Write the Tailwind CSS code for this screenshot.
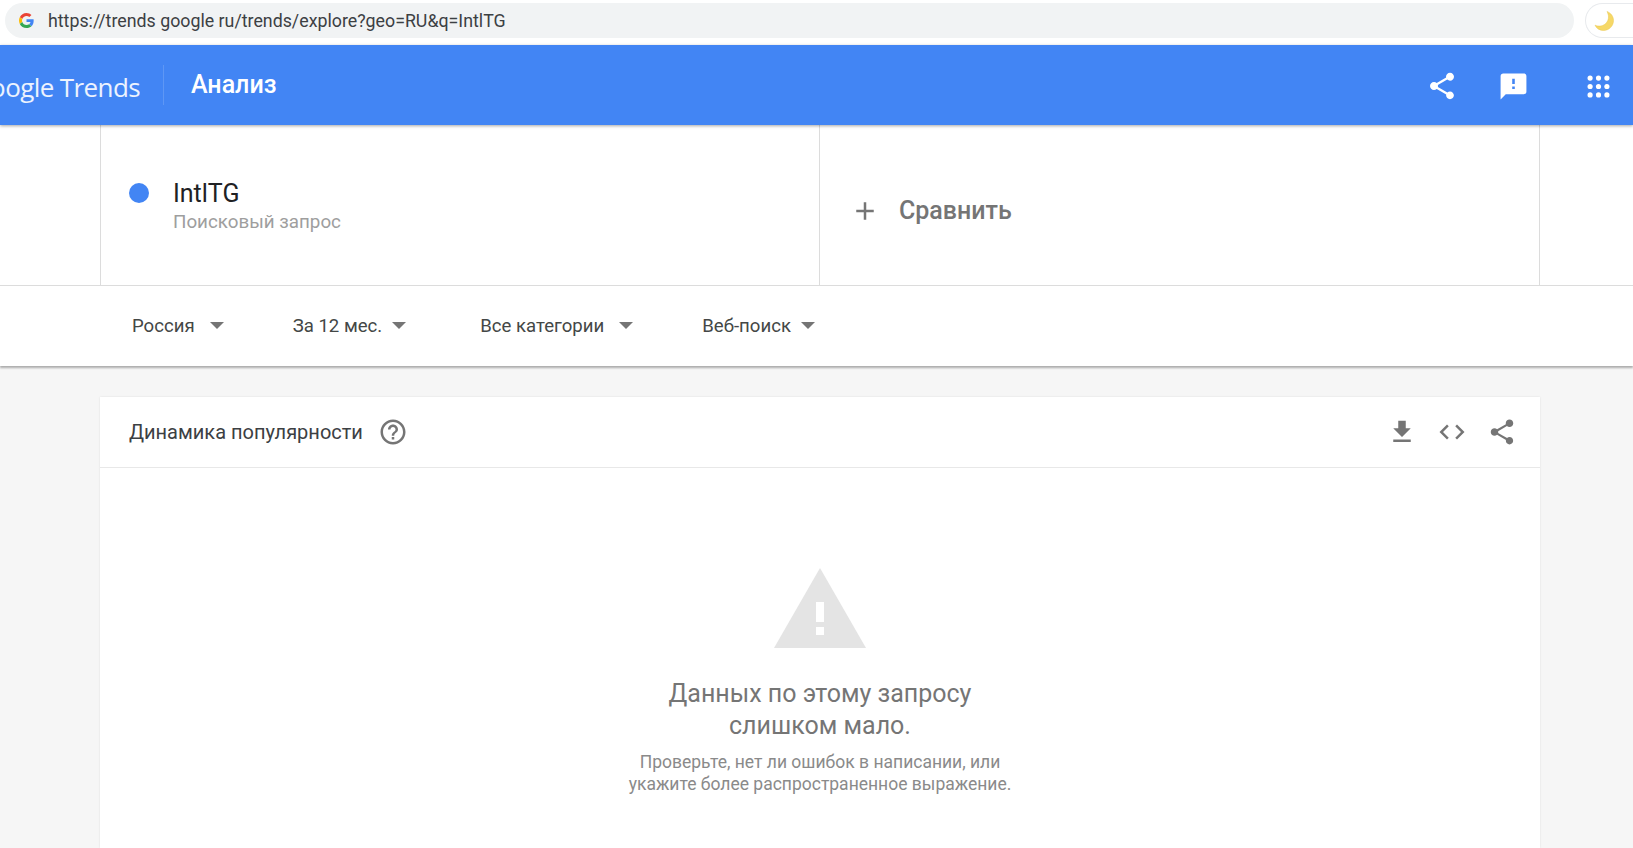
<!DOCTYPE html>
<html lang="ru">
<head>
    <meta charset="UTF-8">
    <title>Google Trends</title>
    <script src="https://cdn.jsdelivr.net/npm/@tailwindcss/browser@4"></script>
</head>
<body class="h-[848px] w-[1633px] overflow-hidden bg-[#f6f6f6] font-['Roboto',sans-serif]">
    <!-- Browser address bar -->
    <div class="flex h-[45px] items-start overflow-hidden bg-white pl-[5px] pt-[3px]">
        <div class="flex h-[35px] w-[1569px] shrink-0 items-center rounded-full bg-[#f1f3f4] pl-[14px]">
            <svg class="h-[15px] w-[15px]" viewBox="0 0 48 48">
                <path fill="#EA4335" d="M24 9.500c3.500 0 6.700 1.300 9.100 3.500l6.800-6.800C35.800 2.400 30.300 0 24 0 14.600 0 6.500 5.400 2.600 13.200l7.900 6.200C12.400 13.700 17.700 9.500 24 9.500z"/>
                <path fill="#4285F4" d="M46.900 24.500c0-1.600-.1-3.100-.4-4.500H24v9h12.900c-.6 3-2.200 5.500-4.700 7.200l7.600 5.900c4.400-4.100 7.100-10.100 7.100-17.600z"/>
                <path fill="#FBBC05" d="M10.500 28.600c-.5-1.400-.8-3-.8-4.600s.3-3.200.8-4.600l-7.900-6.200C.9 16.500 0 20.100 0 24s.9 7.500 2.600 10.800l7.900-6.200z"/>
                <path fill="#34A853" d="M24 48c6.500 0 11.900-2.100 15.800-5.800l-7.600-5.900c-2.100 1.400-4.900 2.300-8.200 2.300-6.300 0-11.600-4.200-13.500-9.900l-7.900 6.200C6.500 42.600 14.600 48 24 48z"/>
            </svg>
            <span class="ml-[14px] pt-[1px] text-[17.800px] text-[#3c4043]">https://trends google ru/trends/explore?geo=RU&amp;q=IntlTG</span>
        </div>
        <div class="ml-[11px] flex h-[35px] w-[60px] shrink-0 items-center rounded-l-full border border-r-0 border-[#e8eaed] bg-white pl-[6px]">
            <svg class="h-[24px] w-[24px]" viewBox="0 0 24 24">
                <path fill="#f6d867" stroke="#e8c64e" stroke-width="0.500" d="M15 2.500c4 1.500 6.500 5 6.500 9 0 5.500-4.500 10-10 10-3.700 0-7-2-8.500-5.300 1.300.6 2.700.9 4.200.9 5.200 0 9.300-4 9.300-9.100 0-1.900-.6-3.900-1.500-5.500z"/>
            </svg>
        </div>
    </div>

    <!-- Blue header -->
    <header class="relative z-10 flex h-[80px] items-center bg-[#4285f4] shadow-[0_1px_3px_rgba(0,0,0,0.35)]">
        <div class="w-[140px] shrink-0 overflow-hidden pt-[4px]">
            <div class="flex justify-end whitespace-nowrap font-['Open_Sans',sans-serif] text-[26px] tracking-[-0.6px] text-white/90">Google Trends</div>
        </div>
        <div class="ml-[23px] h-[40px] w-px bg-white/15"></div>
        <h1 class="ml-[27px] text-[25px] font-medium text-white">Анализ</h1>
        <div class="ml-auto flex items-center pt-[2px]">
            <svg class="h-[32px] w-[32px] text-white" viewBox="0 0 24 24" fill="currentColor">
                <path d="M18 16.080c-.76 0-1.440.3-1.960.77L8.910 12.700c.05-.23.090-.46.090-.7s-.040-.47-.090-.7l7.050-4.110c.54.5 1.250.81 2.040.81 1.660 0 3-1.340 3-3s-1.340-3-3-3-3 1.340-3 3c0 .24.040.47.090.7L8.040 9.810C7.500 9.310 6.790 9 6 9c-1.660 0-3 1.340-3 3s1.340 3 3 3c.79 0 1.500-.31 2.040-.81l7.120 4.160c-.05.21-.080.43-.080.65 0 1.610 1.310 2.920 2.920 2.920s2.920-1.310 2.920-2.920-1.310-2.920-2.920-2.920z"/>
            </svg>
            <svg class="ml-[40px] h-[31px] w-[31px] text-white" viewBox="0 0 24 24" fill="currentColor">
                <path d="M20 2H4c-1.100 0-1.990.9-1.990 2L2 22l4-4h14c1.100 0 2-.9 2-2V4c0-1.100-.9-2-2-2zm-7 12h-2v-2h2v2zm0-4h-2V6h2v4z"/>
            </svg>
            <svg class="ml-[54px] mr-[19px] h-[31px] w-[31px] text-white" viewBox="0 0 24 24" fill="currentColor">
                <circle cx="5.500" cy="5.500" r="2"/><circle cx="12" cy="5.500" r="2"/><circle cx="18.500" cy="5.500" r="2"/>
                <circle cx="5.500" cy="12" r="2"/><circle cx="12" cy="12" r="2"/><circle cx="18.500" cy="12" r="2"/>
                <circle cx="5.500" cy="18.500" r="2"/><circle cx="12" cy="18.500" r="2"/><circle cx="18.500" cy="18.500" r="2"/>
            </svg>
        </div>
    </header>

    <!-- Search terms and filters -->
    <section class="bg-white shadow-[0_2px_2px_rgba(0,0,0,0.3)]">
        <div class="flex h-[161px] border-b border-[#dcdcdc] pl-[100px]">
            <div class="flex w-[720px] items-start border-x border-[#dcdcdc] pl-[28px] pt-[54px]">
                <span class="mt-[4px] h-[20px] w-[20px] rounded-full bg-[#4285f4]"></span>
                <div class="ml-[24px]">
                    <div class="text-[25px] leading-[30px] text-[#202124]">IntlTG</div>
                    <div class="text-[18.800px] leading-[26px] text-[#9e9e9e]">Поисковый запрос</div>
                </div>
            </div>
            <div class="flex w-[720px] items-center border-r border-[#dcdcdc] pl-[30px] pt-[12px]">
                <svg class="h-[30px] w-[30px] text-[#757575]" viewBox="0 0 24 24" fill="currentColor">
                    <path d="M19 13h-6v6h-2v-6H5v-2h6V5h2v6h6v2z"/>
                </svg>
                <span class="ml-[19px] text-[25px] font-medium text-[#757575]">Сравнить</span>
            </div>
        </div>
        <div class="flex h-[80px] items-center pl-[132px] pt-[2px] text-[18.600px] text-[#444746]">
            <span>Россия</span>
            <span class="mb-[4px] ml-[15px] h-0 w-0 border-x-[7px] border-t-[7px] border-x-transparent border-t-[#757575]"></span>
            <span class="ml-[69px]">За 12 мес.</span>
            <span class="mb-[4px] ml-[10px] h-0 w-0 border-x-[7px] border-t-[7px] border-x-transparent border-t-[#757575]"></span>
            <span class="ml-[74px]">Все категории</span>
            <span class="mb-[4px] ml-[15px] h-0 w-0 border-x-[7px] border-t-[7px] border-x-transparent border-t-[#757575]"></span>
            <span class="ml-[69px]">Веб-поиск</span>
            <span class="mb-[4px] ml-[10px] h-0 w-0 border-x-[7px] border-t-[7px] border-x-transparent border-t-[#757575]"></span>
        </div>
    </section>

    <!-- Interest over time card -->
    <main class="ml-[100px] mt-[31px] h-[451px] w-[1440px] bg-white shadow-[0_0_2px_rgba(0,0,0,0.1)]">
        <div class="flex h-[71px] items-center border-b border-[#e8e8e8] pl-[29px]">
            <h2 class="text-[20px] text-[#3c4043]">Динамика популярности</h2>
            <svg class="ml-[15px] h-[30px] w-[30px] text-[#757575]" viewBox="0 0 24 24" fill="currentColor">
                <path d="M11 18h2v-2h-2v2zm1-16C6.480 2 2 6.480 2 12s4.480 10 10 10 10-4.480 10-10S17.520 2 12 2zm0 18c-4.410 0-8-3.590-8-8s3.590-8 8-8 8 3.590 8 8-3.590 8-8 8zm0-14c-2.210 0-4 1.790-4 4h2c0-1.100.9-2 2-2s2 .9 2 2c0 2-3 1.750-3 5h2c0-2.250 3-2.500 3-5 0-2.210-1.790-4-4-4z"/>
            </svg>
            <div class="ml-auto flex items-center pr-[23px] text-[#757575]">
                <svg class="h-[30px] w-[30px]" viewBox="0 0 24 24" fill="currentColor">
                    <path d="M19 9h-4V3H9v6H5l7 7 7-7zM5 18v2h14v-2H5z"/>
                </svg>
                <svg class="ml-[20px] h-[30px] w-[30px]" viewBox="0 0 24 24" fill="currentColor">
                    <path d="M9.400 16.600 4.800 12l4.600-4.600L8 6l-6 6 6 6 1.400-1.400zm5.200 0 4.600-4.600-4.600-4.600L16 6l6 6-6 6-1.400-1.400z"/>
                </svg>
                <svg class="ml-[20px] h-[30px] w-[30px]" viewBox="0 0 24 24" fill="currentColor">
                    <path d="M18 16.080c-.76 0-1.440.3-1.960.77L8.910 12.700c.05-.23.090-.46.090-.7s-.040-.47-.090-.7l7.050-4.110c.54.5 1.250.81 2.040.81 1.660 0 3-1.340 3-3s-1.340-3-3-3-3 1.340-3 3c0 .24.040.47.090.7L8.040 9.810C7.500 9.310 6.790 9 6 9c-1.660 0-3 1.340-3 3s1.340 3 3 3c.79 0 1.500-.31 2.040-.81l7.120 4.160c-.05.21-.080.43-.080.65 0 1.610 1.310 2.920 2.920 2.920s2.920-1.310 2.920-2.920-1.310-2.920-2.920-2.920z"/>
                </svg>
            </div>
        </div>
        <div class="flex flex-col items-center pt-[100px] text-center">
            <svg class="h-[80px] w-[92px]" viewBox="0 0 92 80">
                <path fill="#e4e4e4" d="M46 0 92 80H0z"/>
                <path fill="#ffffff" d="M42 34h8v20h-8zM42 59h8v8h-8z"/>
            </svg>
            <p class="mt-[30px] text-[25px] leading-[32px] text-[#757575]">Данных по этому запросу<br>слишком мало.</p>
            <p class="mt-[9px] text-[17.500px] leading-[22px] text-[#8a8a8a]">Проверьте, нет ли ошибок в написании, или<br>укажите более распространенное выражение.</p>
        </div>
    </main>
</body>
</html>
